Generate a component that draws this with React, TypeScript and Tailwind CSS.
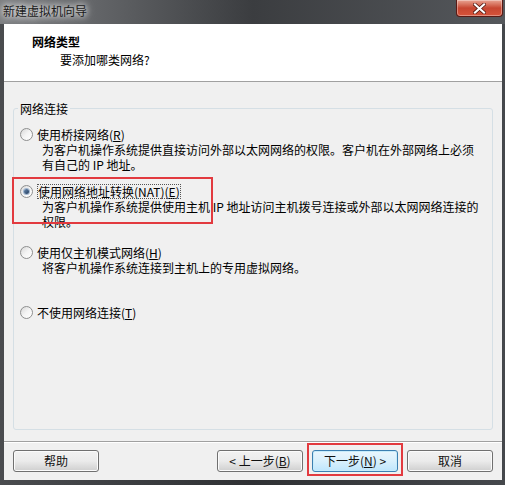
import React from "react";

const FONT = '"Noto Sans CJK SC", "Liberation Sans", sans-serif';

function Radio({ checked }: { checked?: boolean }) {
  return (
    <span className="relative inline-flex h-[13px] w-[13px] shrink-0 items-center justify-center rounded-full border border-[#8e8f8f] bg-gradient-to-br from-[#d8d8d8] via-[#f4f4f4] to-[#ffffff]">
      {checked && (
        <span className="h-[5px] w-[5px] rounded-full bg-gradient-to-br from-[#6b8bb0] to-[#1f3b5e] ring-1 ring-[#9fb6d0]" />
      )}
    </span>
  );
}

function Option({
  label,
  lines,
  checked,
  focused,
  className,
}: {
  label: React.ReactNode;
  lines?: React.ReactNode[];
  checked?: boolean;
  focused?: boolean;
  className?: string;
}) {
  return (
    <div className={className}>
      <div className="flex items-center gap-[4px] leading-[15px]">
        <Radio checked={checked} />
        <span className={focused ? "outline outline-1 outline-dotted outline-[#555] -outline-offset-1 px-px" : ""}>
          {label}
        </span>
      </div>
      {lines && (
        <div className="pl-[22px] leading-[15px]">
          {lines.map((l, i) => (
            <div key={i} className="whitespace-nowrap">
              {l}
            </div>
          ))}
        </div>
      )}
    </div>
  );
}

function Button({
  children,
  primary,
}: {
  children: React.ReactNode;
  primary?: boolean;
}) {
  return (
    <button
      className={
        "flex h-[22px] w-[86px] items-center justify-center rounded-[3px] border text-[12px] leading-none text-[#111] " +
        (primary
          ? "border-[#3c7fb1] bg-gradient-to-b from-[#eaf6fd] via-[#d9f0fc] to-[#bee6fd] shadow-[inset_0_0_0_1px_#c7ecfb]"
          : "border-[#707070] bg-gradient-to-b from-[#f2f2f2] via-[#ebebeb] to-[#cfcfcf] shadow-[inset_0_0_0_1px_#fbfbfb]")
      }
    >
      {children}
    </button>
  );
}

export default function App() {
  return (
    <div
      className="flex h-[485px] w-[505px] flex-col overflow-hidden bg-gradient-to-r from-[#4a4c4f] via-[#2f3134] to-[#45484c] text-[12px] text-black"
      style={{ fontFamily: FONT }}
    >
      {/* title bar */}
      <div className="flex h-[24px] shrink-0 items-start justify-between bg-gradient-to-r from-[#7d7f82] via-[#3b3d40] to-[#55585c]">
        <div className="pl-[3px] pt-[3px] leading-[16px] text-[12px] text-[#1a1a1a] [text-shadow:0_0_6px_#ffffff,0_0_10px_#ffffff]">
          新建虚拟机向导
        </div>
        <div className="mr-[2px] flex h-[17px] w-[47px] items-center justify-center rounded-b-[4px] border border-t-0 border-[#5a1a14] bg-gradient-to-b from-[#e8a493] via-[#c74631] to-[#d6533a] shadow-[inset_0_0_0_1px_rgba(255,255,255,0.35)]">
          <svg width="13" height="11" viewBox="0 0 13 11">
            <path
              d="M2 1.5 L11 9.5 M11 1.5 L2 9.5"
              stroke="#4a1008"
              strokeWidth="3.6"
              strokeLinecap="square"
            />
            <path
              d="M2 1.5 L11 9.5 M11 1.5 L2 9.5"
              stroke="#ffffff"
              strokeWidth="2.2"
              strokeLinecap="square"
            />
          </svg>
        </div>
      </div>

      {/* client area */}
      <div className="ml-[4px] mr-[3px] flex flex-1 flex-col bg-[#f0f0f0]">
        {/* header */}
        <div className="h-[58px] shrink-0 border-b border-[#a0a0a0] bg-white pl-[28px] pt-[10px]">
          <div className="font-bold leading-[15px]">网络类型</div>
          <div className="mt-[3px] pl-[28px] leading-[15px]">要添加哪类网络?</div>
        </div>

        {/* content */}
        <div className="flex-1 px-[9px] pt-[26px]">
          <div className="relative h-[322px] rounded-[3px] border border-[#d5dfe5] pl-[6px] pt-[18px]">
            <span className="absolute -top-[8px] left-[4px] bg-[#f0f0f0] px-[2px] leading-[15px]">
              网络连接
            </span>

            <Option
              label={
                <>
                  使用桥接网络(<u>R</u>)
                </>
              }
              lines={[
                "为客户机操作系统提供直接访问外部以太网网络的权限。客户机在外部网络上必须",
                "有自己的 IP 地址。",
              ]}
            />
            <Option
              className="mt-[12px]"
              checked
              focused
              label={
                <>
                  使用网络地址转换(NAT)(<u>E</u>)
                </>
              }
              lines={[
                "为客户机操作系统提供使用主机 IP 地址访问主机拨号连接或外部以太网网络连接的",
                "权限。",
              ]}
            />
            <Option
              className="mt-[16px]"
              label={
                <>
                  使用仅主机模式网络(<u>H</u>)
                </>
              }
              lines={["将客户机操作系统连接到主机上的专用虚拟网络。"]}
            />
            <Option
              className="mt-[30px]"
              label={
                <>
                  不使用网络连接(<u>T</u>)
                </>
              }
            />

            {/* highlight annotation */}
            <div className="pointer-events-none absolute left-[-2px] top-[68px] h-[47px] w-[201px] border-2 border-[#e23a3f]" />
          </div>
        </div>

        {/* separator */}
        <div className="h-[2px] shrink-0 border-t border-[#a0a0a0] bg-white" />

        {/* footer */}
        <div className="flex h-[37px] shrink-0 items-start justify-between px-[9px] pt-[7px]">
          <Button>帮助</Button>
          <div className="flex gap-[9px]">
            <Button>
              &lt; 上一步(<u>B</u>)
            </Button>
            <div className="relative">
              <Button primary>
                下一步(<u>N</u>) &gt;
              </Button>
              <div className="pointer-events-none absolute -left-[5px] -top-[7px] h-[33px] w-[96px] border-2 border-[#e23a3f]" />
            </div>
            <Button>取消</Button>
          </div>
        </div>
      </div>
      <div className="h-[5px] shrink-0" />
    </div>
  );
}
